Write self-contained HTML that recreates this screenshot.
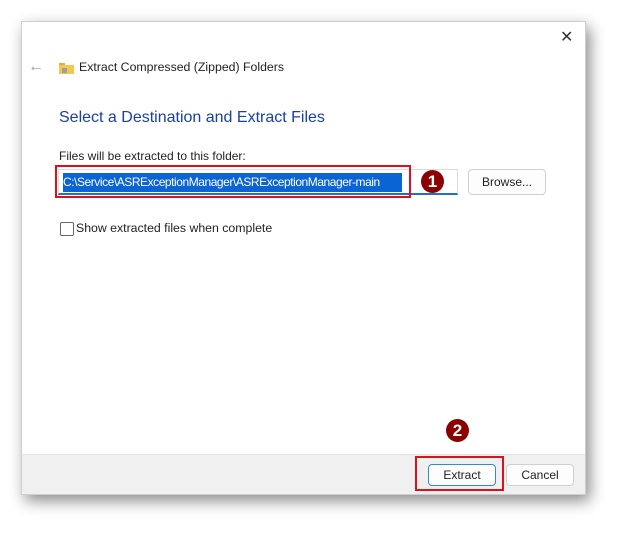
<!DOCTYPE html>
<html><head><style>
body{margin:0;width:626px;height:535px;background:#fff;position:relative;overflow:hidden;font-family:"Segoe UI","Liberation Sans",sans-serif;}
.win{position:absolute;left:21px;top:21px;width:563px;height:472px;background:#fff;border:1px solid #cfcfcf;box-shadow:4px 6px 14px rgba(0,0,0,.45);}
.a{position:absolute;}
.foot{position:absolute;left:0;right:0;bottom:0;height:39px;background:#f0f0f0;border-top:1px solid #e3e3e3;}
.btn{position:absolute;background:#fdfdfd;border:1px solid #d0d0d0;border-radius:4px;font-size:12px;color:#222;text-align:center;box-sizing:border-box;}
.badge{position:absolute;width:23px;height:23px;border-radius:50%;background:#8b0000;color:#fff;font-weight:bold;font-size:17px;text-align:center;line-height:23px;font-family:"Liberation Sans",sans-serif;}
.red{position:absolute;border:2px solid #e0101a;box-sizing:border-box;}
</style></head><body>
<div class="win">
<div class="a" style="left:538px;top:5px;font-size:16px;color:#333;">✕</div>
<div class="a" style="left:6px;top:36px;font-size:16px;color:#999;">←</div>
<svg class="a" style="left:37px;top:40px" width="15" height="12"><rect x="0" y="1" width="6" height="3" fill="#e0b040"/><rect x="0" y="3" width="15" height="9" fill="#f2c94c"/><rect x="3" y="6" width="5" height="5" fill="#a0a0a0"/></svg>
<div class="a" style="left:57px;top:38px;font-size:12.3px;color:#222;">Extract Compressed (Zipped) Folders</div>
<div class="a" style="left:37px;top:87px;font-size:16px;color:#1a3fa8;">Select a Destination and Extract Files</div>
<div class="a" style="left:37px;top:127px;font-size:12px;color:#222;">Files will be extracted to this folder:</div>
<div class="a" style="left:36px;top:147px;width:400px;height:26px;border:1px solid #ddd;border-bottom:2px solid #1f6fd0;box-sizing:border-box;"></div>
<div class="a" style="left:41px;top:151px;width:339px;height:19px;background:#0a64d4;color:#fff;font-size:12px;line-height:19px;white-space:nowrap;letter-spacing:-0.45px;overflow:hidden;">C:\Service\ASRExceptionManager\ASRExceptionManager-main</div>
<div class="btn" style="left:446px;top:147px;width:78px;height:26px;line-height:24px;">Browse...</div>
<div class="a" style="left:38px;top:200px;width:12px;height:12px;border:1px solid #666;border-radius:2px;"></div>
<div class="a" style="left:54px;top:199px;font-size:12.3px;color:#222;">Show extracted files when complete</div>
<div class="foot">
<div class="btn" style="left:406px;top:9px;width:68px;height:22px;line-height:20px;border-color:#3a86d4;">Extract</div>
<div class="btn" style="left:484px;top:9px;width:68px;height:22px;line-height:20px;">Cancel</div>
</div>
</div>
<div class="red" style="left:55px;top:165px;width:356px;height:33px;"></div>
<div class="badge" style="left:421px;top:170px;">1</div>
<div class="badge" style="left:446px;top:419px;">2</div>
<div class="red" style="left:415px;top:456px;width:89px;height:35px;"></div>
</body></html>
